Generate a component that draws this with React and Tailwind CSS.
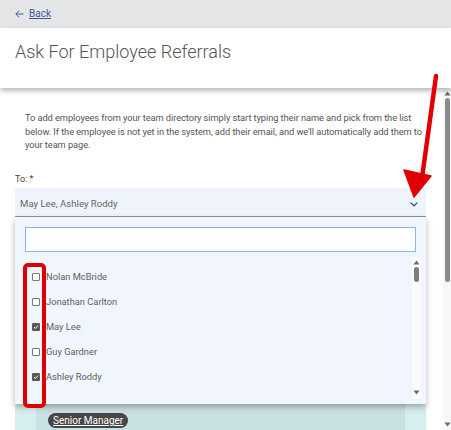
import React from 'react';

const PEOPLE = [
  { name: 'Nolan McBride', checked: false },
  { name: 'Jonathan Carlton', checked: false },
  { name: 'May Lee', checked: true },
  { name: 'Guy Gardner', checked: false },
  { name: 'Ashley Roddy', checked: true },
  { name: 'Lee May', checked: false },
];

function Box({ checked }) {
  if (checked) {
    return (
      <span className="w-[8px] h-[8px] bg-[#5a5a5a] rounded-[1px] flex items-center justify-center shrink-0">
        <svg width="6" height="6" viewBox="0 0 6 6">
          <path d="M1 3.1 L2.4 4.4 L5 1.6" fill="none" stroke="#fff" strokeWidth="1" />
        </svg>
      </span>
    );
  }
  return <span className="w-[8px] h-[8px] border border-[#7a7a7a] rounded-[1px] bg-white shrink-0" />;
}

function Arrow({ up }) {
  return (
    <svg width="7" height="5" viewBox="0 0 7 5">
      <path d={up ? 'M3.5 0.5 L6.5 4.5 L0.5 4.5 Z' : 'M0.5 0.5 L6.5 0.5 L3.5 4.5 Z'} fill="#6b6b6b" />
    </svg>
  );
}

export default function App() {
  return (
    <div className="relative w-[451px] h-[430px] overflow-hidden bg-white font-['Roboto','Liberation_Sans',sans-serif]">
      {/* back bar */}
      <div className="h-[28px] bg-[#e4e5e7] flex items-center pl-[15px] gap-[5px] text-[#3c5b9a]">
        <svg width="9" height="8" viewBox="0 0 9 8">
          <path d="M8.5 4 H1 M4 0.8 L0.8 4 L4 7.2" fill="none" stroke="#3c5b9a" strokeWidth="1" />
        </svg>
        <a className="text-[10px] underline leading-none">Back</a>
      </div>

      {/* title */}
      <div className="relative z-10 h-[60px] bg-white pl-[15px] pt-[12px] shadow-[0_3px_5px_rgba(0,0,0,0.28)]">
        <h1 className="text-[18px] leading-[24px] font-light text-[#555]">Ask For Employee Referrals</h1>
      </div>

      <div className="flex h-[342px]">
        <div className="flex-1 pl-[15px] pr-[17px] overflow-hidden">
          <p className="pl-[10px] pt-[23px] text-[9.3px] leading-[13.7px] text-[#555] whitespace-nowrap tracking-[-0.08px]">
            To add employees from your team directory simply start typing their name and pick from the list
            <br />
            below. If the employee is not yet in the system, add their email, and we'll automatically add them to
            <br />
            your team page.
          </p>

          <div className="mt-[21px] text-[9px] leading-[12px] text-[#444]">To: *</div>

          <div className="mt-[3px] h-[29px] bg-[#eef3fc] border-b border-[#8d9299] flex items-center justify-between pl-[5px] pr-[8px]">
            <span className="text-[9.6px] text-[#666] pt-[4px]">May Lee, Ashley Roddy</span>
            <svg width="8" height="5" viewBox="0 0 8 5" className="mt-[4px]">
              <path d="M0.7 0.7 L4 4 L7.3 0.7" fill="none" stroke="#2c416f" strokeWidth="1.2" />
            </svg>
          </div>

          {/* open dropdown */}
          <div className="relative z-10 h-[187px] bg-[#f1f5fd] pl-[10px] pr-[5px] pt-[10px] shadow-[0_3px_6px_rgba(0,0,0,0.3)]">
            <div className="h-[25px] mr-[5px] bg-white border border-[#8fb3f0]" />
            <div className="flex h-[141px] mt-[5px] overflow-hidden">
              <ul className="flex-1 pt-[7px] pl-[7px]">
                {PEOPLE.map((p) => (
                  <li key={p.name} className="h-[25px] flex items-center gap-[6px]">
                    <Box checked={p.checked} />
                    <span className="text-[9.3px] text-[#5f5f5f]">{p.name}</span>
                  </li>
                ))}
              </ul>
              <div className="w-[9px] bg-[#fbfbfb] flex flex-col items-center pt-[3px] pb-[3px]">
                <Arrow up />
                <div className="w-[5px] h-[15px] bg-[#7d7d7d] rounded-full mt-[2px]" />
                <div className="flex-1" />
                <Arrow />
              </div>
            </div>
          </div>

          {/* card under the dropdown */}
          <div className="h-[30px] bg-[#cae1e3] flex">
            <div className="w-[21px] bg-[#d6eeee]" />
            <div className="flex-1 flex items-start pl-[12px] pt-[9px]">
              <span className="bg-[#464646] text-white text-[10px] leading-[15px] px-[5px] rounded-full underline">
                Senior Manager
              </span>
            </div>
            <div className="w-[21px] bg-[#d6eeee]" />
          </div>
        </div>

        {/* page scrollbar */}
        <div className="w-[8px] bg-[#f7f7f7] flex flex-col items-center pt-[3px] pb-[3px]">
          <Arrow up />
          <div className="w-[5px] h-[184px] bg-[#8a8a8a] rounded-full mt-[2px]" />
          <div className="flex-1" />
          <Arrow />
        </div>
      </div>

      {/* red markup */}
      <svg className="absolute inset-0 z-20 pointer-events-none" width="451" height="430" viewBox="0 0 451 430">
        <rect x="25" y="265" width="19" height="141" rx="3" fill="none" stroke="#e10000" strokeWidth="4" />
        <line x1="436" y1="76" x2="422" y2="178" stroke="#e10000" strokeWidth="4.5" strokeLinecap="round" />
        <path d="M404 170 L431 176 L414 197 Z" fill="#e10000" stroke="#e10000" strokeWidth="1.5" strokeLinejoin="round" />
      </svg>
    </div>
  );
}
